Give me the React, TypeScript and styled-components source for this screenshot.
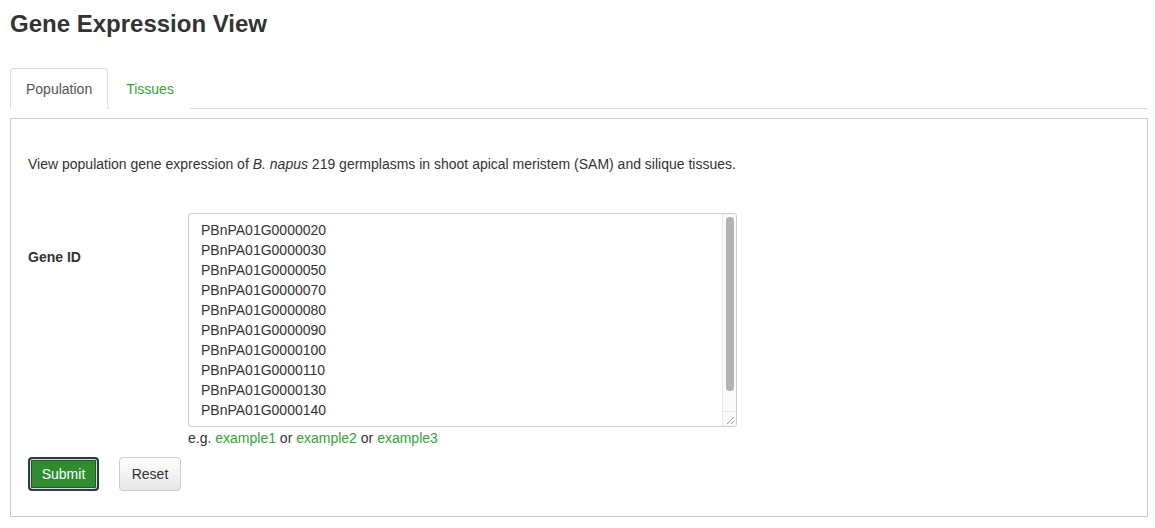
import { createGlobalStyle, styled } from 'styled-components';

const geneIds = [
  'PBnPA01G0000020',
  'PBnPA01G0000030',
  'PBnPA01G0000050',
  'PBnPA01G0000070',
  'PBnPA01G0000080',
  'PBnPA01G0000090',
  'PBnPA01G0000100',
  'PBnPA01G0000110',
  'PBnPA01G0000130',
  'PBnPA01G0000140',
];

function App() {
  return (
    <Page>
      <GlobalStyle />
      <Title>Gene Expression View</Title>
      <TabList>
        <Tab $active>Population</Tab>
        <Tab>Tissues</Tab>
      </TabList>
      <Panel>
        <Description>
          View population gene expression of <em>B. napus</em> 219 germplasms
          in shoot apical meristem (SAM) and silique tissues.
        </Description>
        <FormRow>
          <FieldLabel>Gene ID</FieldLabel>
          <FieldBody>
            <InputFrame>
              <GeneInput
                defaultValue={geneIds.join('\n') + '\n'}
                spellCheck={false}
              />
              {/* drawn scrollbar, headless chrome hides the native one */}
              <ScrollTrack>
                <ScrollThumb />
              </ScrollTrack>
              <ResizeCorner>
                <svg width="10" height="10" viewBox="0 0 10 10">
                  <path d="M9 2 L2 9 M9 6 L6 9" stroke="#999" strokeWidth="1" />
                </svg>
              </ResizeCorner>
            </InputFrame>
            <Hint>
              e.g. <HintLink href="#">example1</HintLink> or{' '}
              <HintLink href="#">example2</HintLink> or{' '}
              <HintLink href="#">example3</HintLink>
            </Hint>
          </FieldBody>
        </FormRow>
        <ButtonRow>
          <SubmitButton type="button">Submit</SubmitButton>
          <ResetButton type="button">Reset</ResetButton>
        </ButtonRow>
      </Panel>
    </Page>
  );
}

const GlobalStyle = createGlobalStyle`
  body {
    margin: 0;
    background: #fff;
    color: #333;
    font-family: "Liberation Sans", Arial, sans-serif;
    font-size: 14px;
  }
`;

const Page = styled.div`
  padding: 10px 7px 0 10px;
`;

const Title = styled.h1`
  margin: 0;
  font-size: 24px;
  line-height: 28px;
  font-weight: bold;
  color: #333;
`;

const TabList = styled.div`
  display: flex;
  margin-top: 30px;
  border-bottom: 1px solid #ddd;
`;

const Tab = styled.div<{ $active?: boolean }>`
  height: 39px;
  display: flex;
  align-items: center;
  padding: 0 15px;
  margin-right: 2px;
  margin-bottom: -1px;
  font-size: 14px;
  color: ${(p) => (p.$active ? '#555' : '#34a534')};
  background: #fff;
  border: 1px solid ${(p) => (p.$active ? '#ddd' : 'transparent')};
  border-bottom-color: ${(p) => (p.$active ? '#fff' : 'transparent')};
  border-radius: 4px 4px 0 0;
`;

const Panel = styled.div`
  margin-top: 9px;
  border: 1px solid #ccc;
  padding: 35px 17px 0;
  height: 399px;
  box-sizing: border-box;
`;

const Description = styled.p`
  margin: 0;
  line-height: 20px;
  font-size: 14px;
  color: #333;
`;

const FormRow = styled.div`
  display: flex;
  margin-top: 39px;
`;

const FieldLabel = styled.div`
  width: 160px;
  flex-shrink: 0;
  padding-top: 34px;
  font-weight: bold;
  line-height: 20px;
`;

const FieldBody = styled.div`
  display: flex;
  flex-direction: column;
`;

const InputFrame = styled.div`
  position: relative;
  width: 549px;
  height: 214px;
`;

const GeneInput = styled.textarea`
  display: block;
  width: 100%;
  height: 100%;
  box-sizing: border-box;
  padding: 6px 28px 5px 12px;
  border: 1px solid #ccc;
  border-radius: 3px;
  font-family: "Liberation Sans", Arial, sans-serif;
  font-size: 14px;
  line-height: 20px;
  color: #333;
  resize: none;
  outline: none;
  overflow: hidden;
`;

const ScrollTrack = styled.div`
  position: absolute;
  top: 1px;
  right: 1px;
  bottom: 16px;
  width: 14px;
  background: #fafafa;
  border-left: 1px solid #e8e8e8;
  border-radius: 0 2px 0 0;
  padding: 3px 3px 0 3px;
  box-sizing: border-box;
`;

const ScrollThumb = styled.div`
  width: 8px;
  height: 174px;
  border-radius: 4px;
  background: #b2b2b2;
`;

const ResizeCorner = styled.div`
  position: absolute;
  right: 1px;
  bottom: 1px;
  width: 14px;
  height: 15px;
  box-sizing: border-box;
  background: #fafafa;
  border-top: 1px solid #e8e8e8;
  border-left: 1px solid #e8e8e8;
  border-radius: 0 0 2px 0;
  display: flex;
  align-items: flex-end;
  justify-content: flex-end;

  svg {
    display: block;
    margin: 0 1px 1px 0;
  }
`;

const Hint = styled.div`
  line-height: 20px;
  color: #333;
  padding-top: 1px;
`;

const HintLink = styled.a`
  color: #34a534;
  text-decoration: none;
`;

const ButtonRow = styled.div`
  display: flex;
  gap: 20px;
  margin-top: 9px;
`;

const ButtonBase = styled.button`
  height: 34px;
  box-sizing: border-box;
  font-family: "Liberation Sans", Arial, sans-serif;
  font-size: 14px;
  border-radius: 4px;
  cursor: pointer;
  padding: 0;
`;

const SubmitButton = styled(ButtonBase)`
  width: 71px;
  color: #fff;
  background: #2f8c2f;
  border: 2px solid #2e3a42;
  box-shadow: inset 0 0 0 1px #d6ddd6, inset 0 0 0 2px #1e5a1e;
`;

const ResetButton = styled(ButtonBase)`
  width: 62px;
  color: #333;
  background: linear-gradient(#fff, #e6e6e6);
  border: 1px solid #ccc;
`;

export default App;
